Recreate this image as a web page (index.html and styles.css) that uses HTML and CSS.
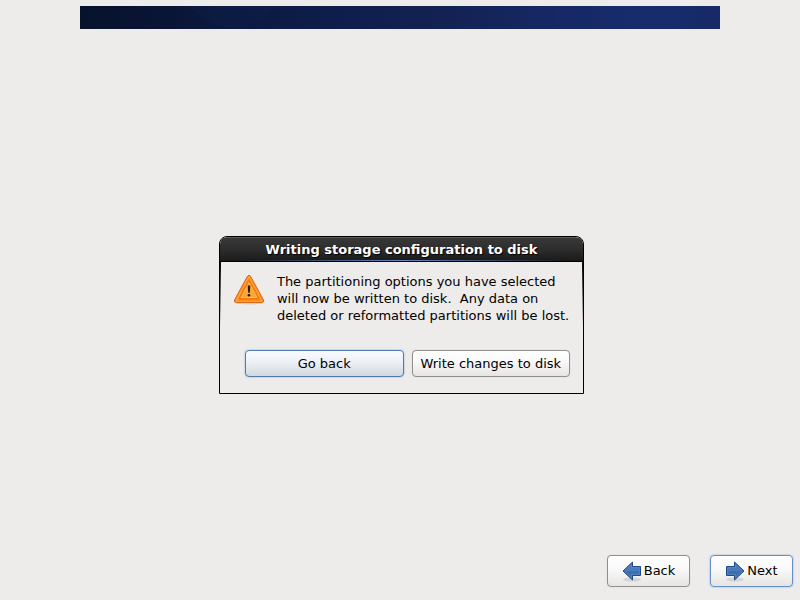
FILE: index.html
```
<!DOCTYPE html>
<html lang="en">
<head>
    <meta charset="UTF-8">
    <meta name="viewport" content="width=device-width, initial-scale=1.0">
    <title>Writing storage configuration to disk</title>
    <link rel="stylesheet" href="styles.css">
</head>
<body>
    <header class="banner">
        <svg class="banner-art" viewBox="0 0 640 23" preserveAspectRatio="none" aria-hidden="true">
            <path d="M109 0 Q125 20 151 22 Q181 20 195 0 Z" fill="#10254f" fill-opacity="0.25"/>
        </svg>
    </header>

    <main class="content">
        <section class="dialog" role="alertdialog" aria-labelledby="dialog-title" aria-describedby="dialog-message">
            <h1 class="dialog-title" id="dialog-title">Writing storage configuration to disk</h1>
            <div class="dialog-body">
                <div class="message">
                    <svg class="warning-icon" width="32" height="32" viewBox="0 0 32 32" aria-hidden="true">
                        <defs>
                            <linearGradient id="warn" x1="0" y1="0" x2="0" y2="1">
                                <stop offset="0" stop-color="#f57900"/>
                                <stop offset="1" stop-color="#fcaf3e"/>
                            </linearGradient>
                        </defs>
                        <ellipse cx="16" cy="30" rx="14" ry="1.5" fill="#000" fill-opacity="0.12"/>
                        <path d="M14.3 3.5 Q16 .8 17.7 3.5 L30.5 27 Q31.2 29.5 28.7 29.5 H3.3 Q.8 29.5 1.5 27 Z" fill="#ff8a1c" stroke="#d96a10" stroke-width="1"/>
                        <path d="M16 3.5 L29 28.3 H3 Z" fill="none" stroke="#ffa94d" stroke-width="1" stroke-linejoin="round"/>
                        <path d="M16 8 L25.5 25.5 H6.5 Z" fill="url(#warn)" stroke="#f57900" stroke-width="2" stroke-linejoin="round"/>
                        <path d="M16 9.5 L24 24.5 H8 Z" fill="#fba63c" stroke="#fdb95c" stroke-width="1" stroke-linejoin="round"/>
                        <path d="M14.7 12.5 H17.3 L16.8 19.7 H15.2 Z" fill="#241c10"/>
                        <circle cx="16" cy="22.2" r="1.3" fill="#241c10"/>
                    </svg>
                    <p class="message-text" id="dialog-message">The partitioning options you have selected
will now be written to disk.  Any data on
deleted or reformatted partitions will be lost.</p>
                </div>
                <div class="dialog-buttons">
                    <button type="button" class="button button-default">Go back</button>
                    <button type="button" class="button">Write changes to disk</button>
                </div>
            </div>
        </section>
    </main>

    <footer class="navigation">
        <button type="button" class="button nav-button">
            <svg class="arrow-icon" width="20" height="22" viewBox="0 0 20 22" aria-hidden="true">
                <ellipse cx="10" cy="19.5" rx="9" ry="2" fill="#000" fill-opacity="0.1"/>
                <path d="M1 11 L10.5 2 V6.5 H18.5 V15.5 H10.5 V20 Z" fill="#3d6fb0" stroke="#204a87" stroke-width="1"/>
                <path d="M2.5 11 L9.5 4.4 V7.5 H17.5 V11 Z" fill="#6b94c8" fill-opacity="0.3"/>
                <path d="M2.5 11 L9.5 4.4 V7.5 H17.5 V14.5 H9.5 V17.6 Z" fill="none" stroke="#6f9bd1" stroke-opacity="0.4" stroke-width="1"/>
            </svg>
            <span>Back</span>
        </button>
        <button type="button" class="button nav-button button-focus">
            <svg class="arrow-icon" width="20" height="22" viewBox="0 0 20 22" aria-hidden="true">
                <ellipse cx="10" cy="19.5" rx="9" ry="2" fill="#000" fill-opacity="0.1"/>
                <path d="M19 11 L9.5 2 V6.5 H1.5 V15.5 H9.5 V20 Z" fill="#3d6fb0" stroke="#204a87" stroke-width="1"/>
                <path d="M17.5 11 L10.5 4.4 V7.5 H2.5 V11 Z" fill="#6b94c8" fill-opacity="0.3"/>
                <path d="M17.5 11 L10.5 4.4 V7.5 H2.5 V14.5 H10.5 V17.6 Z" fill="none" stroke="#6f9bd1" stroke-opacity="0.4" stroke-width="1"/>
            </svg>
            <span>Next</span>
        </button>
    </footer>
</body>
</html>
```
FILE: styles.css
```
* {
    box-sizing: border-box;
}
body {
    display: flex;
    flex-direction: column;
    min-height: 100vh;
    margin: 0;
    padding-top: 6px;
    background-color: #edeceb;
    color: #000;
    font-family: "DejaVu Sans", sans-serif;
    font-size: 13px;
    line-height: 17px;
}
.banner {
    width: 80%;
    height: 23px;
    margin: 0 auto;
    background: linear-gradient(to right, #07122b 0%, #0a1434 12%, #0c1a42 27%, #101e4e 43%, #12214f 53%, #162865 75%, #182b6c 88%, #172a67 100%);
}
.banner-art {
    display: block;
    width: 100%;
    height: 100%;
}
.content {
    flex: 1;
    display: flex;
    align-items: center;
    justify-content: center;
    padding: 46px 0 0 3px;
}
.dialog {
    border: 1px solid #000;
    border-radius: 8px 8px 0 0;
    background-color: #edeceb;
    overflow: hidden;
}
.dialog-title {
    margin: 0;
    padding: 3px 0;
    border-top: 1px solid #5a5a5a;
    border-bottom: 1px solid #000;
    background:
        linear-gradient(to right, transparent 5%, #6389c5 50%, transparent 95%) bottom / 100% 1px no-repeat,
        linear-gradient(#383838, #2d2d2d 50%, #1a1a1a);
    color: #fff;
    font-size: 13px;
    line-height: 17px;
    text-align: center;
    text-shadow: 1px 1px 1px #000;
}
/* window frame shading that fades out down both sides */
.dialog-body {
    padding: 11px 13px 16px;
    background:
        linear-gradient(#000, transparent) left top / 1px 64px no-repeat,
        linear-gradient(#000, transparent) right top / 1px 64px no-repeat;
}
.message {
    display: flex;
    gap: 12px;
}
.warning-icon {
    flex: none;
}
.message-text {
    margin: 0;
    white-space: pre;
}
.dialog-buttons {
    display: grid;
    grid-template-columns: 1fr 1fr;
    gap: 8px;
    margin: 26px 0 0 12px;
}
.button {
    height: 27px;
    padding: 0 8px 1px;
    border: 1px solid #918e8b;
    border-radius: 4px;
    background: linear-gradient(#fff, #fafafa 40%, #e6e5e4);
    box-shadow: 0 0 1px #c4c1be;
    color: #000;
    font-family: inherit;
    font-size: 13px;
    line-height: 17px;
    white-space: nowrap;
}
.button-default {
    border-color: #4f78ad;
    background: linear-gradient(#f8fbff, #eef2f8 40%, #d3d8dd);
    box-shadow: 0 0 2px #86abd9;
}
.button-focus {
    border-color: #668fc6;
    box-shadow: 0 0 2px #86abd9;
}
.navigation {
    display: flex;
    justify-content: flex-end;
    gap: 20px;
    padding: 0 7px 13px;
}
.nav-button {
    display: flex;
    align-items: center;
    justify-content: center;
    gap: 2px;
    min-width: 83px;
    height: 32px;
}
.arrow-icon {
    flex: none;
}
```
